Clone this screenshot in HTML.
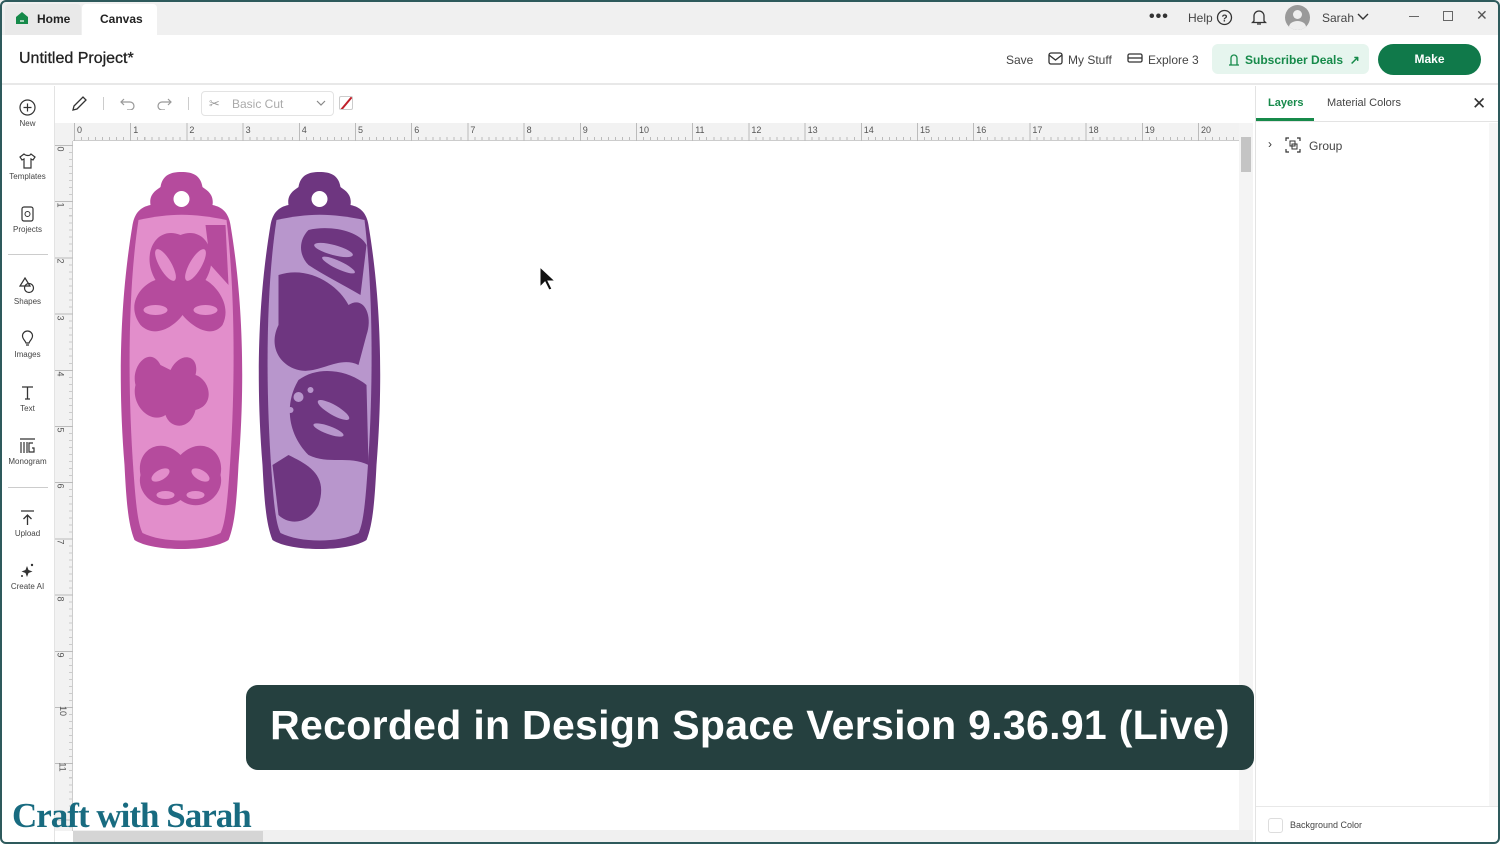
<!DOCTYPE html>
<html><head><meta charset="utf-8">
<style>
*{margin:0;padding:0;box-sizing:border-box}
body{width:1500px;height:844px;overflow:hidden;background:#fff;font-family:"Liberation Sans",sans-serif;position:relative;color:#333}
.abs{position:absolute}
.frame{position:absolute;inset:0;border:2px solid #2e5a5c;border-radius:6px;pointer-events:none;z-index:50}
.top{left:0;top:0;width:1500px;height:35px;background:#f0f0f0}
.tab{top:4px;height:31px;font-size:12px;font-weight:bold;line-height:31px;color:#222}
.hdr{left:0;top:35px;width:1500px;height:50px;background:#fff;border-bottom:2px solid #e8e8e8}
.side{left:0;top:86px;width:55px;height:758px;background:#fff}
.si{position:absolute;left:0;width:55px;text-align:center;font-size:8px;color:#444}
.si svg{display:block;margin:0 auto 3px}
.rulh{left:73px;top:123px;width:1166px;height:18px;background:#f2f2f2;border-bottom:1px solid #ccc;
background-image:repeating-linear-gradient(90deg,#bbb 0 1px,transparent 1px 7.025px);background-size:100% 4px;background-repeat:no-repeat;background-position:1px 14px}
.rulv{left:55px;top:141px;width:18px;height:690px;background:#f2f2f2;border-right:1px solid #ccc}
.num{font-size:9px;color:#555;position:absolute}
.panel{left:1255px;top:86px;width:245px;height:758px;background:#fff;border-left:1px solid #e3e3e3}
</style></head><body>
<div class="abs top"></div>
<div class="abs" style="left:5px;top:4px;width:76px;height:31px;background:#e9e9e9;border-radius:4px 4px 0 0"></div>
<svg class="abs" style="left:15px;top:11px" width="14" height="14" viewBox="0 0 14 14"><path d="M1 6L7 1L13 6V13H1Z" fill="#168a4a"/><path d="M5 10h4" stroke="#fff" stroke-width="1.2"/></svg>
<div class="abs tab" style="left:37px">Home</div>
<div class="abs" style="left:82px;top:4px;width:75px;height:31px;background:#fff;border-radius:4px 4px 0 0"></div>
<div class="abs tab" style="left:100px">Canvas</div>
<div class="abs" style="left:1149px;top:8px;font-size:16px;font-weight:bold;letter-spacing:1px">•••</div>
<div class="abs" style="left:1188px;top:11px;font-size:12px;color:#444">Help</div>
<svg class="abs" style="left:1216px;top:9px" width="17" height="17"><circle cx="8.5" cy="8.5" r="7" fill="none" stroke="#333" stroke-width="1.3"/><text x="8.5" y="12.5" font-size="10" text-anchor="middle" font-family="Liberation Sans" font-weight="bold" fill="#333">?</text></svg>
<svg class="abs" style="left:1251px;top:9px" width="16" height="17"><path d="M3 12V7a5 5 0 0110 0v5l1.5 1.5h-13Z M6 15h4" fill="none" stroke="#333" stroke-width="1.3"/></svg>
<div class="abs" style="left:1285px;top:5px;width:25px;height:25px;border-radius:50%;background:#9a9a9a;overflow:hidden"><div class="abs" style="left:8px;top:5px;width:9px;height:9px;border-radius:50%;background:#eee"></div><div class="abs" style="left:4px;top:16px;width:17px;height:12px;border-radius:50%;background:#eee"></div></div>
<div class="abs" style="left:1322px;top:11px;font-size:12px;color:#444">Sarah</div>
<svg class="abs" style="left:1357px;top:13px" width="12" height="8"><path d="M1 1l5 5 5-5" fill="none" stroke="#333" stroke-width="1.4"/></svg>
<div class="abs" style="left:1409px;top:16px;width:10px;height:1px;background:#666"></div>
<div class="abs" style="left:1443px;top:11px;width:10px;height:10px;border:1px solid #666"></div>
<div class="abs" style="left:1476px;top:7px;font-size:14px;color:#555">✕</div>

<div class="abs hdr"></div>
<div class="abs" style="left:19px;top:50px;font-size:16px;color:#222;-webkit-text-stroke:0.3px #222">Untitled Project*</div>
<div class="abs" style="left:1006px;top:53px;font-size:12px;color:#444">Save</div>
<svg class="abs" style="left:1048px;top:52px" width="15" height="13"><rect x="1" y="1" width="13" height="11" rx="2" fill="none" stroke="#333" stroke-width="1.3"/><path d="M1 3l6.5 5L14 3" fill="none" stroke="#333" stroke-width="1.3"/></svg>
<div class="abs" style="left:1068px;top:53px;font-size:12px;color:#444">My Stuff</div>
<svg class="abs" style="left:1127px;top:53px" width="16" height="11"><rect x="1" y="1" width="14" height="8" rx="1.5" fill="none" stroke="#333" stroke-width="1.3"/><path d="M1 5h14" stroke="#333" stroke-width="1.3"/></svg>
<div class="abs" style="left:1148px;top:53px;font-size:12px;color:#444">Explore 3</div>
<div class="abs" style="left:1212px;top:44px;width:157px;height:30px;border-radius:6px;background:#e6f5ee"></div>
<svg class="abs" style="left:1228px;top:52px" width="12" height="14"><path d="M3 13V6a3 3 0 016 0v7M1 13h10" fill="none" stroke="#168a4a" stroke-width="1.3"/></svg>
<div class="abs" style="left:1245px;top:53px;font-size:12px;font-weight:bold;color:#168a4a">Subscriber Deals &nbsp;↗</div>
<div class="abs" style="left:1378px;top:44px;width:103px;height:31px;border-radius:16px;background:#10794a;color:#fff;font-size:12px;font-weight:bold;text-align:center;line-height:31px">Make</div>

<div class="abs side"></div>
<div class="si" style="top:99px"><svg width="17" height="17"><circle cx="8.5" cy="8.5" r="7.5" fill="none" stroke="#333" stroke-width="1.2"/><path d="M8.5 4.5v8M4.5 8.5h8" stroke="#333" stroke-width="1.2"/></svg>New</div>
<div class="si" style="top:152px"><svg width="17" height="17"><path d="M5 2L1 5l2 3 2-1v9h7V7l2 1 2-3-4-3c-1 2-5 2-7 0z" fill="none" stroke="#333" stroke-width="1.2"/></svg>Templates</div>
<div class="si" style="top:205px"><svg width="17" height="17"><rect x="3" y="2" width="11" height="14" rx="2" fill="none" stroke="#333" stroke-width="1.2"/><circle cx="8.5" cy="9" r="2.5" fill="none" stroke="#333"/></svg>Projects</div>
<div class="abs" style="left:8px;top:254px;width:40px;height:1px;background:#ccc"></div>
<div class="si" style="top:277px"><svg width="17" height="17"><path d="M6 1l5 8H1z" fill="none" stroke="#333" stroke-width="1.2"/><circle cx="10" cy="11" r="4.5" fill="none" stroke="#333" stroke-width="1.2"/></svg>Shapes</div>
<div class="si" style="top:330px"><svg width="17" height="17"><path d="M8.5 1a5 5 0 015 5c0 3-3 5-3.5 7h-3c-.5-2-3.5-4-3.5-7a5 5 0 015-5zM7 15h3" fill="none" stroke="#333" stroke-width="1.2"/></svg>Images</div>
<div class="si" style="top:384px"><svg width="17" height="17"><path d="M3 3h11M8.5 3v12M6 15h5" fill="none" stroke="#333" stroke-width="1.3"/></svg>Text</div>
<div class="si" style="top:437px"><svg width="17" height="17"><path d="M1 2h15M2 5v11M5 5v11M8 5v11M14 6h-4v9h5v-4h-2" fill="none" stroke="#333" stroke-width="1.2"/></svg>Monogram</div>
<div class="abs" style="left:8px;top:487px;width:40px;height:1px;background:#ccc"></div>
<div class="si" style="top:509px"><svg width="17" height="17"><path d="M2 2h13M8.5 16V6M4.5 10l4-4 4 4" fill="none" stroke="#333" stroke-width="1.3"/></svg>Upload</div>
<div class="si" style="top:562px"><svg width="17" height="17"><path d="M8 4l1.5 4 4 1.5-4 1.5L8 15l-1.5-4-4-1.5 4-1.5z" fill="#333"/><circle cx="13" cy="3" r="1.2" fill="#333"/><circle cx="3" cy="14" r="1" fill="#333"/></svg>Create AI</div>
<div class="abs" style="left:54px;top:86px;width:1px;height:758px;background:#e3e3e3"></div>

<!-- toolbar -->
<svg class="abs" style="left:71px;top:95px" width="17" height="17"><path d="M2 15l1-4 9-9 3 3-9 9z" fill="none" stroke="#333" stroke-width="1.3"/></svg>
<div class="abs" style="left:103px;top:97px;width:1px;height:13px;background:#ccc"></div>
<svg class="abs" style="left:120px;top:96px" width="16" height="14"><path d="M4 3L1 6l3 3M1 6h9a4 4 0 010 8H7" fill="none" stroke="#999" stroke-width="1.2"/></svg>
<svg class="abs" style="left:156px;top:96px" width="16" height="14"><path d="M12 3l3 3-3 3M15 6H6a4 4 0 000 8h3" fill="none" stroke="#999" stroke-width="1.2"/></svg>
<div class="abs" style="left:188px;top:97px;width:1px;height:13px;background:#ccc"></div>
<div class="abs" style="left:201px;top:91px;width:133px;height:25px;border:1px solid #e3e3e3;border-radius:4px"></div>
<div class="abs" style="left:209px;top:96px;font-size:13px;color:#999">✂</div>
<div class="abs" style="left:232px;top:97px;font-size:12px;color:#aaa">Basic Cut</div>
<svg class="abs" style="left:316px;top:100px" width="10" height="7"><path d="M1 1l4 4 4-4" fill="none" stroke="#888" stroke-width="1.2"/></svg>
<div class="abs" style="left:339px;top:96px;width:14px;height:14px;border:1px solid #ccc;border-radius:2px;overflow:hidden"><div class="abs" style="left:5px;top:-3px;width:2px;height:20px;background:#c0202a;transform:rotate(40deg)"></div></div>

<!-- rulers -->
<div class="abs rulh"></div>
<div class="abs" style="left:73px;top:123px;width:1166px;height:18px;background-image:repeating-linear-gradient(90deg,#bbb 0 1px,transparent 1px 56.2px);background-position:1px 0"></div>
<div class="abs rulv"></div>
<div class="abs" style="left:55px;top:141px;width:18px;height:690px;background-image:repeating-linear-gradient(180deg,#bbb 0 1px,transparent 1px 56.2px),repeating-linear-gradient(180deg,#ccc 0 1px,transparent 1px 7.025px);background-size:100% 100%,4px 100%;background-position:0 4px,14px 4px;background-repeat:no-repeat,no-repeat"></div>
<div class="abs" style="left:55px;top:123px;width:18px;height:18px;background:#f2f2f2"></div>
<div id="hn"></div>
<div id="vn"></div>
<script>
var h='';for(var i=0;i<=20;i++){h+='<div class="num" style="left:'+(77+i*56.2)+'px;top:125px">'+i+'</div>';}
document.getElementById('hn').innerHTML=h;
var v='';for(var i=0;i<=11;i++){v+='<div class="num" style="left:58px;top:'+(144+i*56.2)+'px;transform:rotate(90deg)">'+i+'</div>';}
document.getElementById('vn').innerHTML=v;
</script>
<!-- scrollbars -->
<div class="abs" style="left:1239px;top:123px;width:14px;height:707px;background:#f4f4f4"></div>
<div class="abs" style="left:1241px;top:137px;width:10px;height:35px;background:#c4c4c4"></div>
<div class="abs" style="left:73px;top:830px;width:1180px;height:14px;background:#f0f0f0"></div>
<div class="abs" style="left:73px;top:831px;width:190px;height:13px;background:#d5d5d5"></div>

<!-- tags -->
<svg class="abs" style="left:108px;top:165px" width="290" height="395" viewBox="0 0 285 395">
<defs>
<path id="tag" d="M40 40 C38 28 48 24 50 22 C52 10 60 7 71 7 C82 7 90 10 92 22 C94 24 104 28 102 40 C112 42 118 48 120 60 C130 120 136 200 128 300 C126 340 124 360 118 375 C100 387 42 387 24 375 C18 360 16 340 14 300 C6 200 12 120 22 60 C24 48 30 42 40 40 Z"/>
</defs>
<g>
<use href="#tag" fill="#b54b9d"/>
<path d="M28 55 C60 48 82 48 116 55 C124 120 126 220 118 320 C116 345 114 360 110 368 C90 378 52 378 32 368 C28 360 26 345 24 320 C16 220 18 120 28 55Z" fill="#e28ecb"/>
<g fill="#b54b9d">
<path d="M70 70 C45 60 30 90 45 115 C30 120 15 140 30 160 C45 175 65 160 72 150 C80 160 100 175 112 160 C122 140 105 120 95 115 C110 90 95 60 70 70Z"/>
<path d="M50 200 C40 180 20 200 25 220 C20 240 40 260 55 250 C60 265 80 265 85 245 C105 240 100 215 85 210 C90 190 70 185 60 205Z"/>
<path d="M70 290 C50 270 25 285 30 310 C25 330 50 350 70 335 C90 350 115 330 110 310 C115 285 90 270 70 290Z"/>
<path d="M95 60 L115 60 L118 120 L100 100Z"/>
</g>
<g fill="#e28ecb">
<ellipse cx="55" cy="100" rx="6" ry="18" transform="rotate(-30 55 100)"/><ellipse cx="85" cy="100" rx="6" ry="18" transform="rotate(30 85 100)"/>
<ellipse cx="45" cy="145" rx="12" ry="5"/><ellipse cx="95" cy="145" rx="12" ry="5"/>
<ellipse cx="50" cy="310" rx="10" ry="5" transform="rotate(-30 50 310)"/><ellipse cx="90" cy="310" rx="10" ry="5" transform="rotate(30 90 310)"/>
<ellipse cx="55" cy="330" rx="9" ry="4"/><ellipse cx="85" cy="330" rx="9" ry="4"/>
</g>
<circle cx="71" cy="34" r="8" fill="#fff"/>
</g>
<g transform="translate(138,0)">
<use href="#tag" fill="#6e3680"/>
<path d="M28 55 C60 48 82 48 116 55 C124 120 126 220 118 320 C116 345 114 360 110 368 C90 378 52 378 32 368 C28 360 26 345 24 320 C16 220 18 120 28 55Z" fill="#b896cc"/>
<g fill="#6e3680">
<path d="M30 110 C60 100 90 120 100 140 C115 130 125 150 118 170 L110 200 C90 190 70 210 50 205 C30 200 20 180 30 160Z"/>
<path d="M50 215 C70 200 100 205 118 220 L120 300 C100 290 80 300 60 290 C40 270 35 240 50 215Z"/>
<path d="M40 290 C60 300 80 310 70 340 C60 360 40 360 30 350 L24 300Z"/>
<path d="M60 65 C80 60 110 65 118 80 L112 130 C95 120 75 110 60 100 C50 90 50 75 60 65Z"/>
</g>
<g fill="#b896cc">
<ellipse cx="85" cy="85" rx="20" ry="5" transform="rotate(15 85 85)"/><ellipse cx="90" cy="100" rx="18" ry="4" transform="rotate(25 90 100)"/>
<circle cx="50" cy="232" r="5"/><circle cx="62" cy="225" r="3"/><circle cx="42" cy="245" r="3"/>
<ellipse cx="85" cy="245" rx="18" ry="5" transform="rotate(30 85 245)"/><ellipse cx="80" cy="265" rx="16" ry="4" transform="rotate(20 80 265)"/>
</g>
<circle cx="71" cy="34" r="8" fill="#fff"/>
</g>
</svg>

<!-- cursor -->
<svg class="abs" style="left:539px;top:266px" width="18" height="26"><path d="M1 1v20l5-5 4 8 3-1-4-8h7z" fill="#111" stroke="#fff" stroke-width="1"/></svg>

<!-- right panel -->
<div class="abs panel"></div>
<div class="abs" style="left:1268px;top:97px;font-size:11px;font-weight:bold;color:#168a4a">Layers</div>
<div class="abs" style="left:1256px;top:118px;width:58px;height:3px;background:#168a4a"></div>
<div class="abs" style="left:1256px;top:121px;width:244px;height:1px;background:#e3e3e3"></div>
<div class="abs" style="left:1327px;top:97px;font-size:11px;color:#444">Material Colors</div>
<div class="abs" style="left:1472px;top:94px;font-size:17px;color:#333">✕</div>
<div class="abs" style="left:1268px;top:137px;font-size:12px;color:#333">›</div>
<svg class="abs" style="left:1285px;top:137px" width="16" height="16"><path d="M1 4V1h3M12 1h3v3M15 12v3h-3M4 15H1v-3" fill="none" stroke="#333" stroke-width="1.2"/><rect x="5" y="4" width="5" height="5" fill="none" stroke="#333"/><rect x="7" y="7" width="5" height="5" fill="none" stroke="#333"/></svg>
<div class="abs" style="left:1309px;top:139px;font-size:12px;color:#444">Group</div>
<div class="abs" style="left:1489px;top:123px;width:10px;height:683px;background:#f6f6f6"></div>
<div class="abs" style="left:1256px;top:806px;width:244px;height:1px;background:#e8e8e8"></div>
<div class="abs" style="left:1268px;top:818px;width:15px;height:15px;border:1px solid #ddd;border-radius:3px"></div>
<div class="abs" style="left:1290px;top:820px;font-size:9px;color:#444">Background Color</div>

<!-- banner -->
<div class="abs" style="left:246px;top:685px;width:1008px;height:85px;background:#25403f;border-radius:12px;color:#fff;font-weight:bold;font-size:41px;line-height:80px;text-align:center;letter-spacing:0.3px">Recorded in Design Space Version 9.36.91 (Live)</div>

<!-- logo -->
<div class="abs" style="left:12px;top:796px;font-family:'Liberation Serif',serif;font-size:35px;font-weight:bold;color:#186b80;letter-spacing:-1px">Craft with Sarah</div>

<div class="frame"></div>
</body></html>
